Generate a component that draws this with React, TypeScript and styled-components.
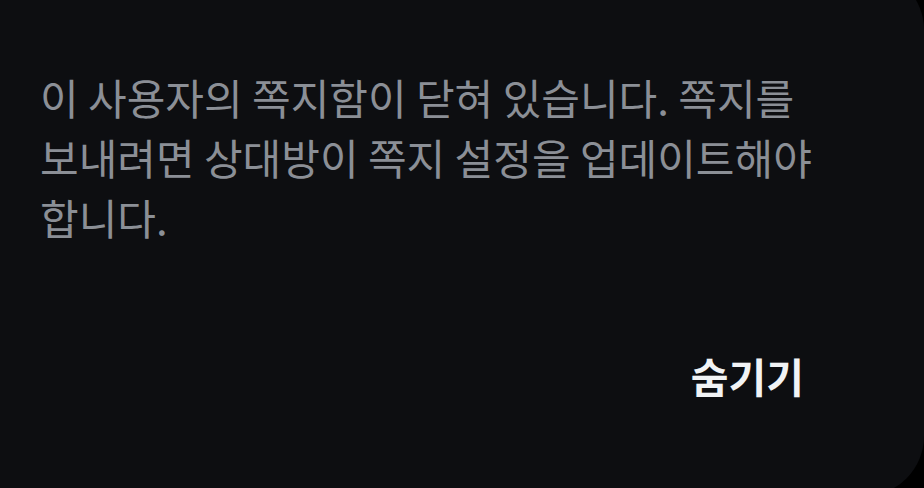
import styled, { createGlobalStyle } from 'styled-components'

const GlobalStyle = createGlobalStyle`
  html, body {
    margin: 0;
    padding: 0;
    background: #000;
  }
  body {
    font-family: "Noto Sans CJK KR", "Noto Sans", sans-serif;
  }
`

const Screen = styled.div`
  width: 924px;
  height: 488px;
  overflow: hidden;
  background: #000;
`

const Sheet = styled.div`
  box-sizing: border-box;
  width: 924px;
  height: 526px;
  margin-top: -30px;
  padding: 97px 40px 0;
  background: #0d0e11;
  border-radius: 0 60px 60px 0;
  display: flex;
  flex-direction: column;
`

const Message = styled.p`
  margin: 0;
  font-size: 42px;
  line-height: 60px;
  color: #8b8f96;
  word-break: keep-all;
`

const Actions = styled.div`
  display: flex;
  justify-content: flex-end;
  margin-top: 98px;
`

const TextButton = styled.button`
  border: none;
  background: none;
  padding: 0 80px 0 0;
  font-family: inherit;
  font-size: 41px;
  font-weight: 700;
  line-height: 60px;
  color: #f1f3f5;
  cursor: pointer;
`

export default function App() {
  return (
    <Screen>
      <GlobalStyle />
      <Sheet>
        <Message>
          이 사용자의 쪽지함이 닫혀 있습니다. 쪽지를 보내려면 상대방이 쪽지 설정을 업데이트해야 합니다.
        </Message>
        <Actions>
          <TextButton>숨기기</TextButton>
        </Actions>
      </Sheet>
    </Screen>
  )
}
